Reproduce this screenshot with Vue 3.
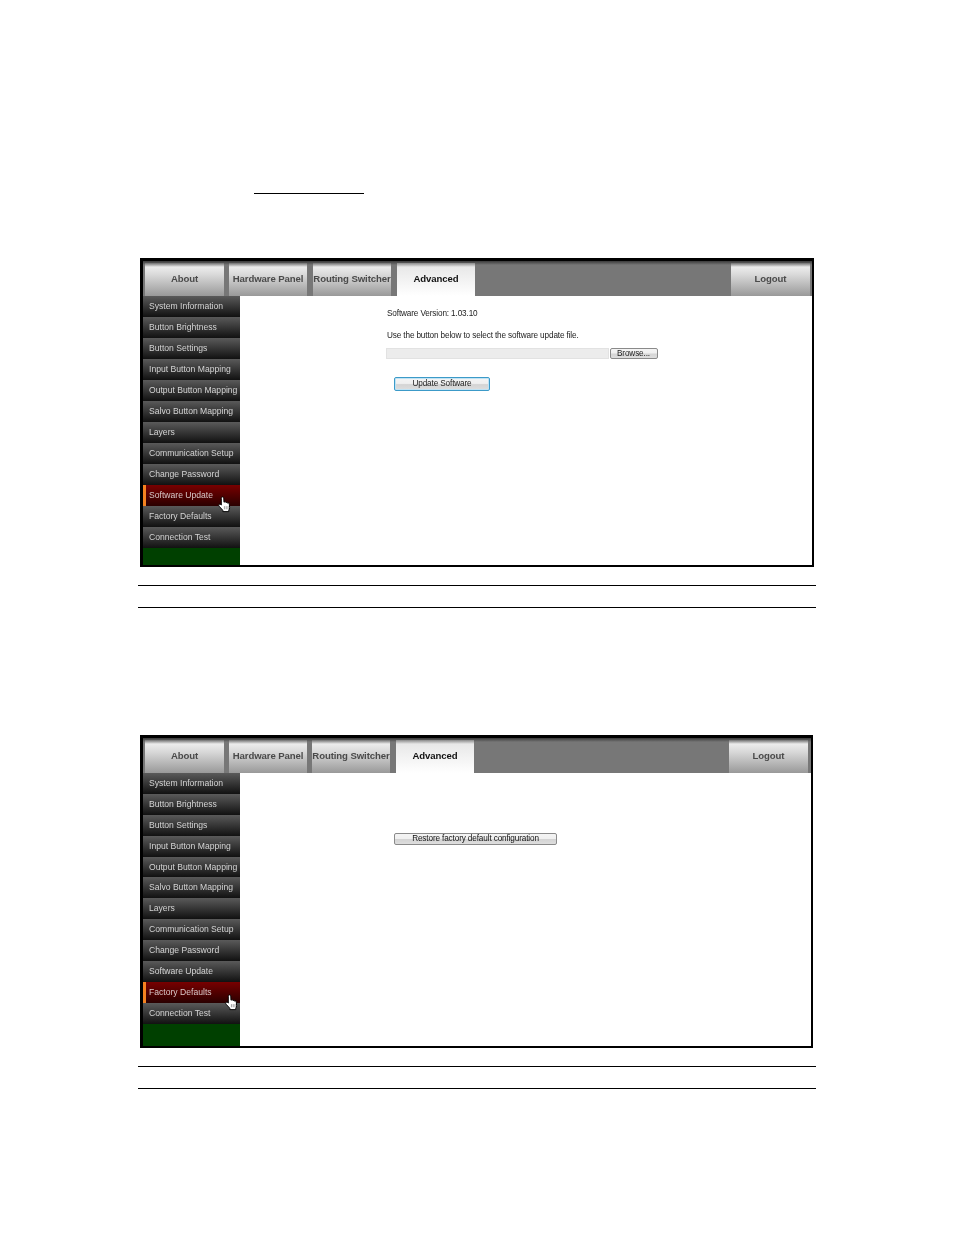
<template>
  <div class="page">
    <div class="top-rule"></div>

    <section
      v-for="win in windows"
      :key="win.id"
      class="shot"
      :class="win.id"
    >
      <div class="window">
        <div class="tabs">
          <div
            v-for="tab in win.tabs"
            :key="tab.name"
            class="tab"
            :class="[tab.cls, { active: tab.name === 'Advanced' }]"
          >
            <span class="tab-label">{{ tab.name }}</span>
          </div>
        </div>
        <div class="body">
          <ul class="side">
            <li
              v-for="item in menu"
              :key="item"
              class="side-item"
              :class="{ current: item === win.current }"
            >
              <span class="side-label">{{ item }}</span>
              <svg
                v-if="item === win.current"
                class="hand"
                viewBox="0 0 12 16"
                width="13"
                height="17"
              >
                <path
                  d="M3.2 1.300c.6-.7 1.900-.5 2.100.6l.2 3.900.5-.2c.7-.2 1.200 0 1.400.5.600-.3 1.300-.1 1.500.5.700-.3 1.400 0 1.600.7l.3 3.500c.1 1-.3 1.900-.8 2.600v1.300H4.400v-1.300L.9 9.600c-.6-.8-.4-1.600.3-1.800.6-.2 1.200 0 1.800.7l0-6.300c0-.3 0-.6.2-.9z"
                  fill="#fff"
                  stroke="#000"
                  stroke-width=".9"
                  stroke-linejoin="round"
                />
                <path d="M5.900 9.500v3M7.600 9.500v3M9.300 9.500v3" stroke="#666" stroke-width=".6" fill="none" />
              </svg>
            </li>
            <li class="side-fill"></li>
          </ul>

          <div v-if="win.id === 'update'" class="content">
            <p class="version">Software Version: 1.03.10</p>
            <p class="hint">Use the button below to select the software update file.</p>
            <div class="file-row">
              <div class="file-input"></div>
              <button class="btn browse">Browse...</button>
            </div>
            <button class="btn primary">Update Software</button>
          </div>
          <div v-else class="content">
            <button class="btn restore">Restore factory default configuration</button>
          </div>
        </div>
      </div>
      <div class="caption"></div>
    </section>
  </div>
</template>

<script setup>
const menu = [
  'System Information',
  'Button Brightness',
  'Button Settings',
  'Input Button Mapping',
  'Output Button Mapping',
  'Salvo Button Mapping',
  'Layers',
  'Communication Setup',
  'Change Password',
  'Software Update',
  'Factory Defaults',
  'Connection Test'
]

const tabs = [
  { name: 'About', cls: 'about' },
  { name: 'Hardware Panel', cls: 'hardware' },
  { name: 'Routing Switcher', cls: 'routing' },
  { name: 'Advanced', cls: 'advanced' },
  { name: 'Logout', cls: 'logout' }
]

const windows = [
  { id: 'update', current: 'Software Update', tabs },
  { id: 'defaults', current: 'Factory Defaults', tabs }
]
</script>

<style>
html,
body {
  margin: 0;
  background: #fff;
}
</style>

<style scoped>
.page {
  width: 954px;
  height: 1235px;
  overflow: hidden;
  background: #fff;
  font-family: "Liberation Sans", Arial, sans-serif;
  padding-top: 193px;
  box-sizing: border-box;
}

.top-rule {
  width: 110px;
  height: 1px;
  margin-left: 254px;
  background: #000;
}

.update {
  margin-top: 64px;
}

.defaults {
  margin-top: 127px;
}

.window {
  box-sizing: border-box;
  margin-left: 140px;
  border: 2px solid #000;
  border-top-width: 3px;
  border-left-width: 3px;
  background: #fff;
}

.update .window {
  width: 674px;
  height: 309px;
}

.defaults .window {
  width: 673px;
  height: 313px;
}

.tabs {
  display: flex;
  align-items: flex-end;
  height: 35px;
  background: linear-gradient(#3a3a3a, #777 4px);
  padding-left: 2px;
  padding-right: 2px;
}

.defaults .tabs {
  padding-right: 3px;
}

.tab {
  box-sizing: border-box;
  height: 33px;
  width: 78px;
  margin-right: 6px;
  padding-bottom: 2px;
  display: flex;
  align-items: center;
  justify-content: center;
  white-space: nowrap;
  font-size: 9.600px;
  font-weight: bold;
  letter-spacing: -0.1px;
  color: #4a4a4a;
  background: linear-gradient(#707070 0, #ececec 4px, #d8d8d8 12px, #999 100%);
}

.tab-label,
.side-label,
.content {
  filter: blur(0.3px);
}

.about {
  width: 79px;
  margin-right: 5px;
}

.defaults .hardware {
  margin-right: 5px;
}

.advanced {
  margin-right: 0;
}

.active {
  color: #111;
  background: linear-gradient(#8a8a8a 0, #e8e8e8 4px, #fff 100%);
}

.logout {
  width: 79px;
  margin-left: auto;
  margin-right: 0;
}

.body {
  display: flex;
  height: calc(100% - 35px);
}

.side {
  list-style: none;
  margin: 0;
  padding: 0;
  width: 97px;
  flex: none;
  display: flex;
  flex-direction: column;
  background: #004000;
}

.side-item {
  position: relative;
  box-sizing: border-box;
  height: 21px;
  flex: none;
  padding-left: 6px;
  line-height: 21px;
  font-size: 8.600px;
  white-space: nowrap;
  color: #d4d4d4;
  background: linear-gradient(#5a5a5a, #111);
}

.defaults .side-item {
  height: 20.900px;
  line-height: 20.900px;
}

.current {
  z-index: 1;
  color: #d8c8c8;
  background: linear-gradient(#780000, #2a0000);
  border-left: 3px solid #f58220;
  padding-left: 3px;
}

.hand {
  position: absolute;
  left: 72px;
  top: 11px;
}

.defaults .hand {
  left: 79px;
  top: 12px;
}

.side-fill {
  flex: 1;
}

.content {
  flex: 1;
  font-size: 8.200px;
  letter-spacing: -0.130px;
  color: #222;
}

.update .content {
  padding: 13px 0 0 146px;
}

.defaults .content {
  padding: 60px 0 0 154px;
}

.version,
.hint {
  margin: 0 0 0 1px;
  line-height: 10px;
}

.hint {
  margin-top: 12px;
}

.file-row {
  display: flex;
  align-items: stretch;
  margin-top: 7px;
  height: 11px;
}

.file-input {
  width: 223px;
  background: #ececec;
  border: 1px solid #e2e2e2;
  box-sizing: border-box;
}

.btn {
  box-sizing: border-box;
  padding: 0 0 1px;
  font-family: inherit;
  font-size: 8.200px;
  letter-spacing: -0.130px;
  color: #222;
  border: 1px solid #8a8a8a;
  border-radius: 2px;
  background: linear-gradient(#f4f4f4, #f0f0f0 45%, #d4d4d4 55%, #dedede);
}

.browse {
  width: 48px;
  margin-left: 1px;
  text-align: left;
  padding-left: 6px;
}

.primary {
  display: block;
  width: 96px;
  height: 14px;
  margin: 18px 0 0 8px;
  border-color: #3c9ac8;
  box-shadow: inset 0 0 0 1px #bfe3f5;
}

.restore {
  display: block;
  width: 163px;
  height: 12px;
  line-height: 9px;
  color: #111;
}

.caption {
  box-sizing: border-box;
  width: 678px;
  height: 23px;
  margin: 18px 0 0 138px;
  border-top: 1px solid #000;
  border-bottom: 1px solid #000;
}
</style>
